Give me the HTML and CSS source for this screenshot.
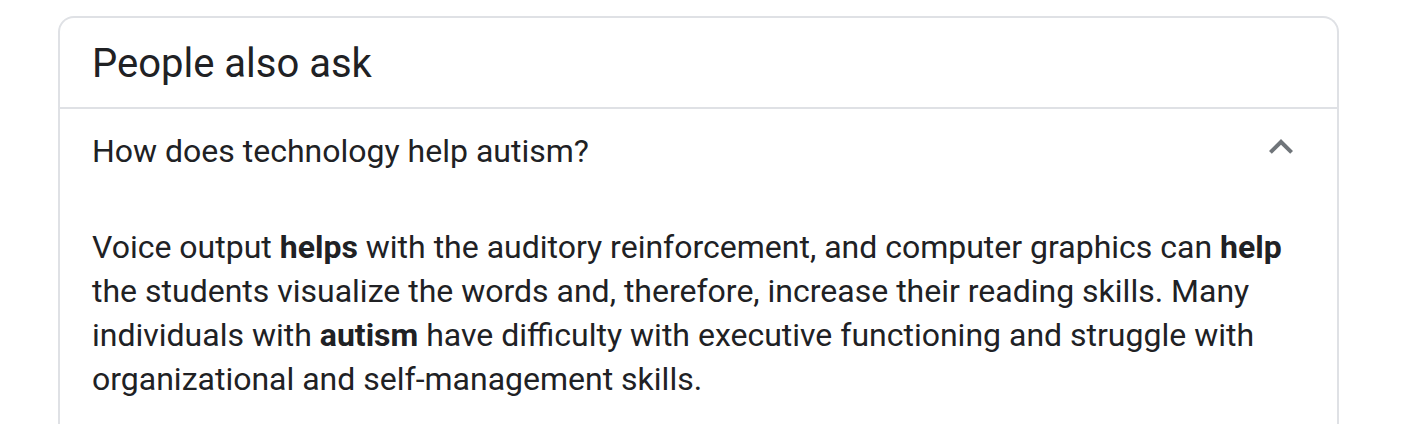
FILE: index.html
```html
<!DOCTYPE html>
<html>
<head>
<meta charset="utf-8">
<link rel="stylesheet" href="styles.css">
</head>
<body>
<div class="card">
  <div class="card-head">People also ask</div>
  <div class="qa">
    <div class="question">
      <span>How does technology help autism?</span>
      <svg class="chev" width="48" height="48" viewBox="0 0 24 24"><path d="M7.41 15.41L12 10.83l4.59 4.58L18 14l-6-6-6 6z" fill="#70757a"/></svg>
    </div>
    <div class="answer">Voice output <b>helps</b> with the auditory reinforcement, and computer graphics can <b>help</b> the students visualize the words and, therefore, increase their reading skills. Many individuals with <b>autism</b> have difficulty with executive functioning and struggle with organizational and self-management skills.</div>
  </div>
</div>
</body>
</html>
```

FILE: styles.css
```css
html, body {
  margin: 0;
  padding: 0;
  background: #fff;
}
body {
  font-family: Roboto, Arial, sans-serif;
  color: #202124;
  padding: 16px 0 0 58px;
  width: 1281px;
}
.card {
  border: 2px solid #dfe1e5;
  border-bottom: none;
  border-radius: 16px 16px 0 0;
  height: 420px;
}
.card-head {
  font-size: 40px;
  line-height: 52px;
  padding: 20px 32px 17px;
  border-bottom: 2px solid #dfe1e5;
}
.question {
  display: flex;
  align-items: center;
  justify-content: space-between;
  padding: 0 32px 4px 32px;
  height: 84px;
  font-size: 32px;
}
.chev {
  margin-right: 0;
  margin-bottom: 8px;
}
.answer {
  font-size: 32px;
  line-height: 44px;
  padding: 28px 32px 0;
}
.answer b {
  font-weight: 700;
}
```
